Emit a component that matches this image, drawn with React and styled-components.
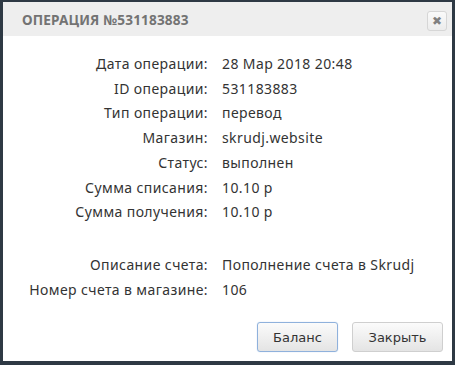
import React from "react";
import styled, { createGlobalStyle } from "styled-components";

const Global = createGlobalStyle`
  html, body { margin: 0; padding: 0; }
  body { background: #2e3944; width: 455px; height: 365px; overflow: hidden; }
`;

const Dialog = styled.div`
  margin: 2px 3px 0 3px;
  width: 449px;
  height: 359px;
  background: #fff;
  display: flex;
  flex-direction: column;
  box-sizing: border-box;
`;

const Header = styled.div`
  height: 34px;
  background: #eeeeee;
  display: flex;
  align-items: center;
  justify-content: space-between;
  padding: 0 5px 0 19px;
  box-sizing: border-box;
`;

const Title = styled.div`
  font-family: "Noto Sans", sans-serif;
  font-weight: 700;
  font-size: 13.6px;
  letter-spacing: 0.15px;
  color: #737373;
`;

const Close = styled.button`
  width: 20px;
  height: 20px;
  padding: 0;
  border: 1px solid #d6d6d6;
  border-radius: 3px;
  background: linear-gradient(#fafafa, #ececec);
  display: flex;
  align-items: center;
  justify-content: center;
  color: #808080;
  font-family: "DejaVu Sans", sans-serif;
  font-size: 12px;
  line-height: 1;
  margin-top: 4px;
`;

const Body = styled.div`
  flex: 1;
  display: grid;
  grid-template-columns: 205px 1fr;
  column-gap: 14px;
  align-content: start;
  padding-top: 16px;
  font-family: "Noto Sans", sans-serif;
  font-size: 14px;
  letter-spacing: 0.4px;
  color: #333;
`;

const Label = styled.div`
  text-align: right;
  line-height: 24.7px;
  white-space: nowrap;
`;

const Value = styled.div`
  line-height: 24.7px;
  white-space: nowrap;
`;

const Spacer = styled.div`
  grid-column: 1 / -1;
  height: ${(p) => p.h}px;
`;

const Footer = styled.div`
  display: flex;
  justify-content: flex-end;
  gap: 14px;
  padding: 0 9px 9px 0;
`;

const Button = styled.button`
  height: 30px;
  padding: 0 14px;
  font-family: "DejaVu Sans", Verdana, sans-serif;
  font-size: 13px;
  color: #333;
  border-radius: 3px;
  border: 1px solid ${(p) => (p.focused ? "#8fb1dc" : "#cfcfcf")};
  background: linear-gradient(#fbfbfb, #e4e4e4);
  box-shadow: ${(p) => (p.focused ? "0 0 1px #a8c4e8" : "none")};
  min-width: ${(p) => p.w}px;
`;

const rows = [
  ["Дата операции:", "28 Мар 2018 20:48"],
  ["ID операции:", "531183883"],
  ["Тип операции:", "перевод"],
  ["Магазин:", "skrudj.website"],
  ["Статус:", "выполнен"],
  ["Сумма списания:", "10.10 р"],
  ["Сумма получения:", "10.10 р"],
];

const rows2 = [
  ["Описание счета:", "Пополнение счета в Skrudj"],
  ["Номер счета в магазине:", "106"],
];

export default function App() {
  return (
    <>
      <Global />
      <Dialog>
        <Header>
          <Title>ОПЕРАЦИЯ №531183883</Title>
          <Close aria-label="close">✖</Close>
        </Header>
        <Body>
          {rows.map(([l, v]) => (
            <React.Fragment key={l}>
              <Label>{l}</Label>
              <Value>{v}</Value>
            </React.Fragment>
          ))}
          <Spacer h={28} />
          {rows2.map(([l, v]) => (
            <React.Fragment key={l}>
              <Label>{l}</Label>
              <Value>{v}</Value>
            </React.Fragment>
          ))}
        </Body>
        <Footer>
          <Button focused w={81}>Баланс</Button>
          <Button w={91}>Закрыть</Button>
        </Footer>
      </Dialog>
    </>
  );
}
